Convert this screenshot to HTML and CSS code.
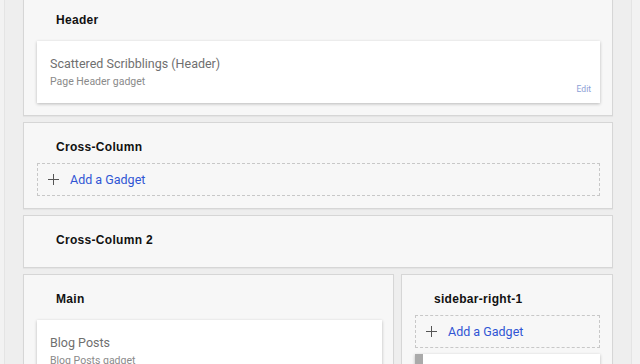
FILE: index.html
```html
<!DOCTYPE html>
<html>
<head>
<meta charset="utf-8">
<link rel="stylesheet" href="styles.css">
</head>
<body>
<div class="layout">
  <section class="section">
    <div class="section-title">Header</div>
    <div class="widget">
      <div class="widget-name">Scattered Scribblings (Header)</div>
      <div class="widget-type">Page Header gadget</div>
      <a class="widget-edit">Edit</a>
    </div>
  </section>
  <section class="section">
    <div class="section-title">Cross-Column</div>
    <div class="add-gadget"><span class="plus"></span><span class="add-text">Add a Gadget</span></div>
  </section>
  <section class="section">
    <div class="section-title">Cross-Column 2</div>
  </section>
  <div class="columns">
    <section class="section main">
      <div class="section-title">Main</div>
      <div class="widget">
        <div class="widget-name">Blog Posts</div>
        <div class="widget-type">Blog Posts gadget</div>
      </div>
    </section>
    <section class="section sidebar">
      <div class="section-title">sidebar-right-1</div>
      <div class="add-gadget"><span class="plus"></span><span class="add-text">Add a Gadget</span></div>
      <div class="widget dragging"><span class="handle"></span></div>
    </section>
  </div>
</div>
</body>
</html>
```
FILE: styles.css
```css
html, body {
  margin: 0;
  padding: 0;
}
body {
  background: #f2f2f2;
  font-family: Roboto, "Liberation Sans", sans-serif;
  height: 364px;
  overflow: hidden;
}
.layout {
  margin: -5px 8px 0 4px;
  padding: 0 18px 0 18px;
  background: #eeeeee;
  border-left: 1px solid #e4e4e4;
  border-right: 1px solid #e4e4e4;
  min-height: 400px;
}
.section {
  background: #f7f7f7;
  border: 1px solid #d6d6d6;
  box-shadow: 0 1px 1px rgba(0,0,0,0.04);
  padding: 0 12px 12px 13px;
  margin-bottom: 6px;
}
.section-title {
  font-family: "Liberation Sans", Arial, sans-serif;
  font-weight: bold;
  font-size: 12px;
  line-height: 14px;
  color: #111;
  padding: 17px 0 8px 19px;
  letter-spacing: 0.3px;
}
.widget {
  position: relative;
  background: #fff;
  margin-top: 6px;
  height: 62px;
  box-sizing: border-box;
  padding: 15px 13px 0 13px;
  box-shadow: 0 1px 3px rgba(0,0,0,0.25);
}
.widget-name {
  font-size: 12.5px;
  line-height: 16px;
  color: #6f6f6f;
}
.widget-type {
  font-size: 10.5px;
  line-height: 14px;
  margin-top: 3px;
  color: #8a8a8a;
}
.widget-edit {
  position: absolute;
  right: 9px;
  bottom: 9px;
  font-size: 8.5px;
  color: #8ba0d6;
}
.add-gadget {
  display: flex;
  align-items: center;
  height: 33px;
  box-sizing: border-box;
  border: 1px dashed #c8c8c8;
  padding-left: 10px;
  margin-top: 1px;
}
.plus {
  position: relative;
  width: 11px;
  height: 11px;
  margin-right: 11px;
}
.plus::before, .plus::after {
  content: "";
  position: absolute;
  background: #555;
}
.plus::before {
  left: 0;
  top: 5px;
  width: 11px;
  height: 1px;
}
.plus::after {
  left: 5px;
  top: 0;
  width: 1px;
  height: 11px;
}
.add-text {
  font-size: 12.5px;
  color: #2f55d4;
}
.columns {
  display: flex;
  gap: 7px;
}
.columns .section {
  margin-bottom: 0;
}
.main {
  width: 345px;
  padding-right: 11px;
}
.sidebar {
  flex: 1;
}
.dragging {
  padding: 0;
}
.handle {
  position: absolute;
  left: 0;
  top: 0;
  width: 8px;
  height: 20px;
  background: #aaaaaa;
}
```
